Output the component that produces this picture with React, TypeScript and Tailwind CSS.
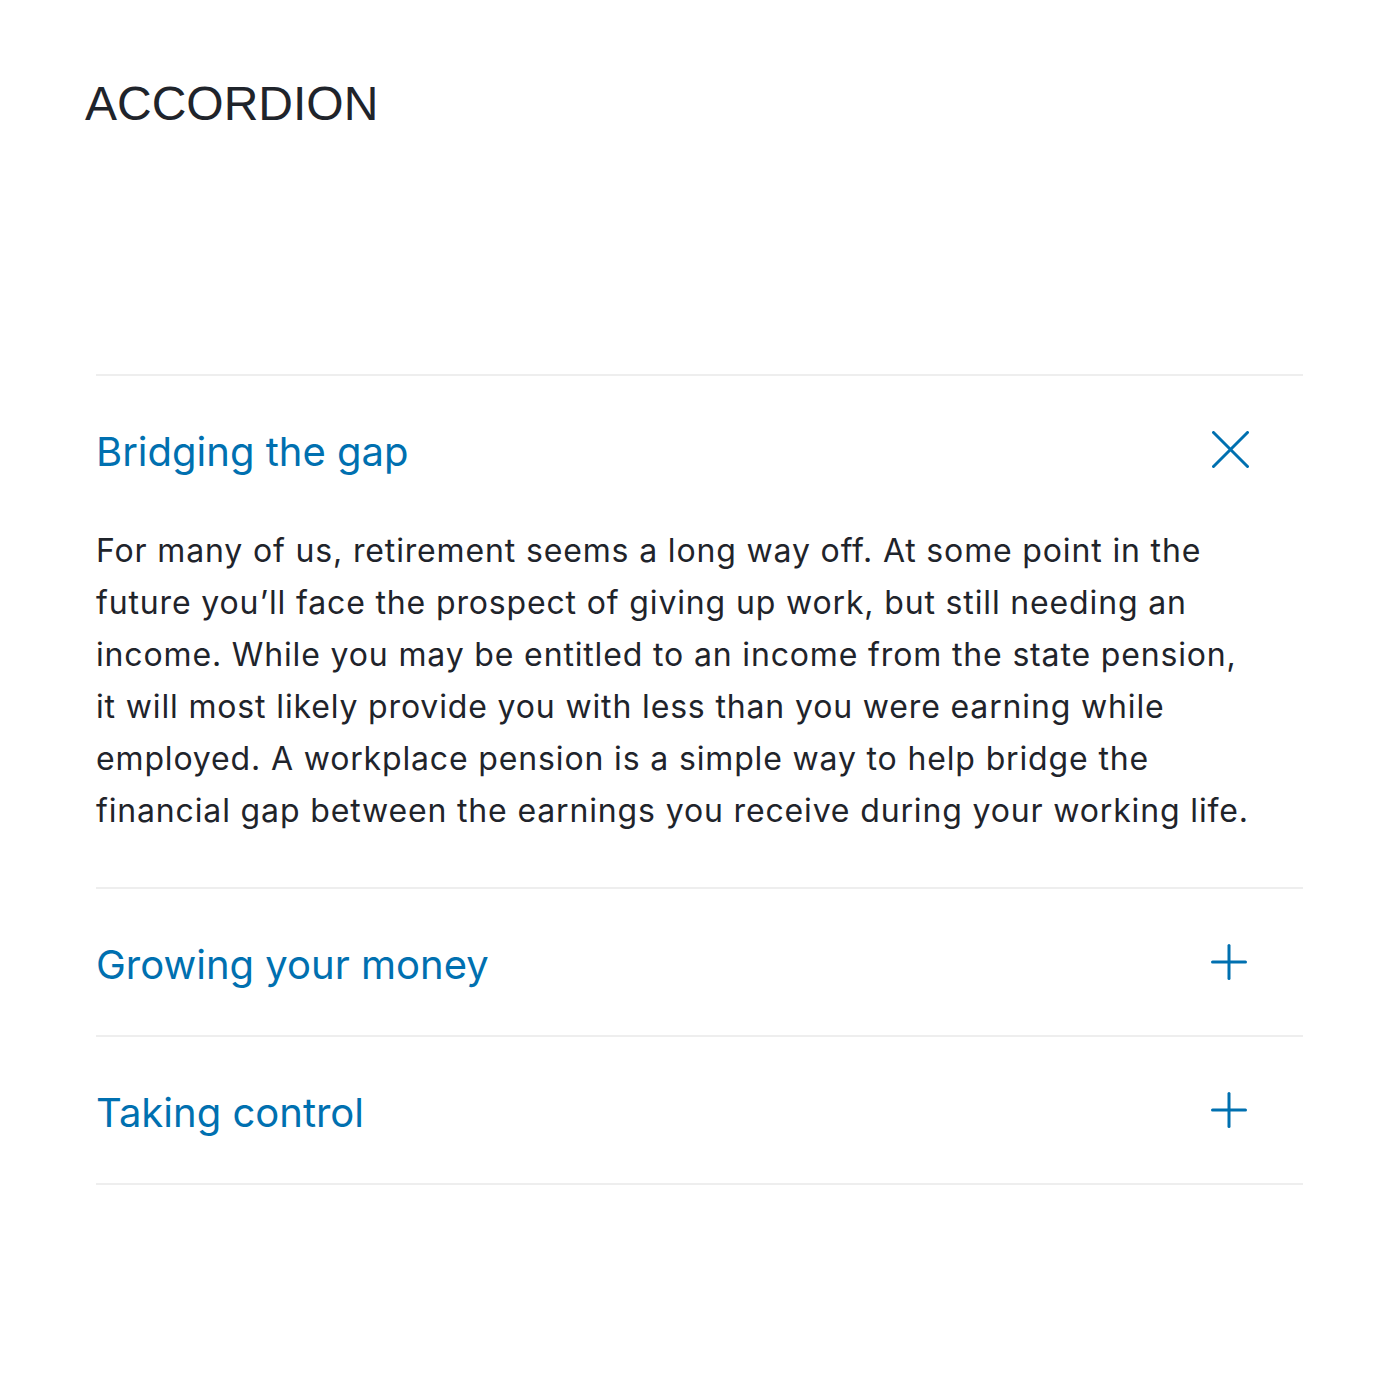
import React from "react";

const Plus = () => (
  <svg width="36" height="36" viewBox="0 0 36 36" fill="none" stroke="#0070b0" strokeWidth="3" strokeLinecap="round">
    <path d="M18 1.5V34.5" />
    <path d="M1.5 18H34.5" />
  </svg>
);

const Close = () => (
  <svg width="37" height="37" viewBox="0 0 37 37" fill="none" stroke="#0070b0" strokeWidth="3" strokeLinecap="round">
    <path d="M1.5 1.5L35.5 35.5" />
    <path d="M35.5 1.5L1.5 35.5" />
  </svg>
);

export default function App() {
  const items = [
    { title: "Growing your money" },
    { title: "Taking control" },
  ];
  return (
    <div className="min-h-[1400px] bg-white">
      <div className="pl-[85px] pt-[74px]">
        <h1 className="text-[48px] leading-[60px] text-[#1f242b] font-['Liberation_Sans',Arial,sans-serif] font-normal">
          ACCORDION
        </h1>
      </div>
      <div className="ml-[96px] mr-[97px] mt-[240px] font-['Inter',sans-serif]">
        <div className="border-t-2 border-[#eeeeee]">
          <div className="flex items-center justify-between pt-[52px] pb-[46px]">
            <span className="text-[40px] leading-[48px] text-[#0070b0]">Bridging the gap</span>
            <span className="mr-[54px] -translate-y-[3px]">
              <Close />
            </span>
          </div>
          <p className="pt-[3px] pb-[50px] pr-[40px] text-[32px] leading-[52px] tracking-[0.85px] text-[#1f242b]">
            For many of us, retirement seems a long way off. At some point in the future you’ll face the prospect of giving up work, but still needing an income. While you may be entitled to an income from the state pension, it will most likely provide you with less than you were earning while employed. A workplace pension is a simple way to help bridge the financial gap between the earnings you receive during your working life.
          </p>
        </div>
        {items.map((it) => (
          <div key={it.title} className="border-t-2 border-[#eeeeee]">
            <div className="flex items-center justify-between pt-[52px] pb-[46px]">
              <span className="text-[40px] leading-[48px] text-[#0070b0]">{it.title}</span>
              <span className="mr-[56px] -translate-y-[3px]">
                <Plus />
              </span>
            </div>
          </div>
        ))}
        <div className="border-t-2 border-[#eeeeee]" />
      </div>
    </div>
  );
}
